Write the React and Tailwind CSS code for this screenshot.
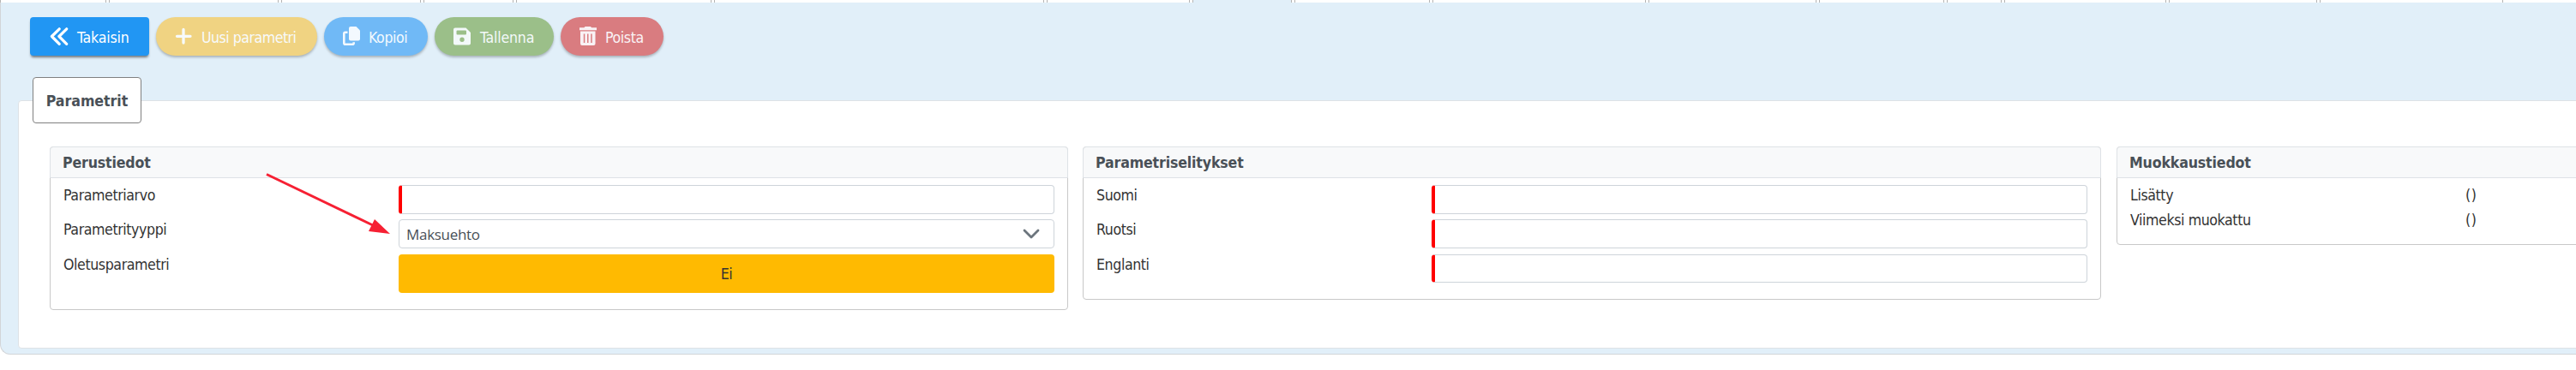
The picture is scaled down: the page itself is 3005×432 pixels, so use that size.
import React from 'react';

// Bottom slivers of the window tabs above the page
const TABS = [
  { width: 'w-[124px]' },
  { width: 'w-[198px]' },
  { width: 'w-[163px]' },
  { width: 'w-[105px]' },
  { width: 'w-[228px]' },
  { width: 'w-[385px]' },
  { width: 'w-[167px]' },
  { width: 'w-[116px]', active: true },
  { width: 'w-[158px]' },
  { width: 'w-[249px]' },
  { width: 'w-[196px]' },
  { width: 'w-[146px]' },
  { width: 'w-[64px]' },
  { width: 'w-[189px]' },
  { width: 'w-[173px]' },
  { width: 'w-[214px]' },
];

const ICONS = {
  back: (
    <g fill="none" stroke="currentColor" strokeWidth="3.2" strokeLinecap="round" strokeLinejoin="round">
      <path d="M11.2 2.8 2.4 11.5l8.8 8.8M19.7 2.8l-8.8 8.7 8.8 8.8" />
    </g>
  ),
  plus: <path d="M11 3.5V19M3.500 11.300H19" fill="none" stroke="currentColor" strokeWidth="3.3" strokeLinecap="round" />,
  copy: (
    <>
      <path d="M10 0h6.500L21 4.500v10a2 2 0 0 1-2 2h-9a2 2 0 0 1-2-2V2a2 2 0 0 1 2-2z" fill="currentColor" />
      <path d="M6.500 6.800H3.800a1.500 1.500 0 0 0-1.500 1.500v10.900a1.500 1.500 0 0 0 1.500 1.500h8.400a1.500 1.500 0 0 0 1.500-1.500v-1" fill="none" stroke="currentColor" strokeWidth="2.6" />
    </>
  ),
  save: (
    <path
      fill="currentColor"
      fillRule="evenodd"
      d="M3 1.500h12.500L21 7v12.500a2 2 0 0 1-2 2H3a2 2 0 0 1-2-2v-16a2 2 0 0 1 2-2zM5.500 4.500a1 1 0 0 0-1 1v3a1 1 0 0 0 1 1h9.500a1 1 0 0 0 1-1v-3a1 1 0 0 0-1-1zM11 12.500a2.700 2.700 0 1 0 0 5.400 2.700 2.700 0 0 0 0-5.400z"
    />
  ),
  trash: (
    <>
      <path d="M7.500 0h6.500l1 1.300h6v3H1v-3h5.500z" fill="currentColor" />
      <path
        fill="currentColor"
        fillRule="evenodd"
        d="M2 5.500h17.500V20a2 2 0 0 1-2 2H4a2 2 0 0 1-2-2zM5.800 8.500v10.500h1.500V8.500zm4.200 0v10.500h1.500V8.500zm4.200 0v10.500h1.500V8.500z"
      />
    </>
  ),
};

const ACTIONS = [
  { label: 'Takaisin', icon: 'back', look: 'w-[139px] gap-[10px] rounded bg-[#2196f3] pl-[23px] tracking-[-0.2px] text-white shadow-[0_3px_3px_-1px_rgba(0,0,0,0.5)]' },
  { label: 'Uusi parametri', icon: 'plus', look: 'w-[188px] gap-[10px] rounded-full bg-[#f0d382] pl-[21px] tracking-[-0.5px] text-[#f7fafb] shadow-[0_2px_3px_rgba(0,0,0,0.25)]' },
  { label: 'Kopioi', icon: 'copy', look: 'w-[121px] gap-[9px] rounded-full bg-[#70b9f6] pl-[21px] tracking-[-0.4px] text-[#f3f9fe] shadow-[0_2px_3px_rgba(0,0,0,0.25)]' },
  { label: 'Tallenna', icon: 'save', look: 'w-[139px] gap-[10px] rounded-full bg-[#9bbf89] pl-[21px] tracking-[-0.2px] text-[#f3f9fa] shadow-[0_2px_3px_rgba(0,0,0,0.25)]' },
  { label: 'Poista', icon: 'trash', look: 'w-[120px] gap-[9px] rounded-full bg-[#d97c80] pl-[21px] tracking-[-0.4px] text-[#f9f2f5] shadow-[0_2px_3px_rgba(0,0,0,0.25)]' },
];

function ActionButton({ label, icon, look }) {
  return (
    <button className={`flex h-[45px] items-center whitespace-nowrap ${look}`}>
      <svg viewBox="0 0 22 22" className="mb-0.5 size-[22px] shrink-0">{ICONS[icon]}</svg>
      <span className="pt-[3px]">{label}</span>
    </button>
  );
}

function Card({ title, className, children }) {
  return (
    <section className={`shrink-0 rounded border border-[#c8c8c8] ${className}`}>
      <h2 className="-mx-px -mt-px flex h-[37px] items-center rounded-t border border-[#dee2e6] bg-[#f8f9fa] pt-0.5 pl-[14px] font-bold tracking-[-0.15px] text-[#495057]">
        {title}
      </h2>
      {children}
    </section>
  );
}

function Field({ label, className, children }) {
  return (
    <div className={`flex items-start ${className ?? ''}`}>
      <label className="w-[391px] shrink-0 leading-6">{label}</label>
      {children}
    </div>
  );
}

function RequiredInput({ className }) {
  return <input className={`w-[765px] rounded border border-l-4 border-[#ced4da] border-l-[#ff0000] bg-white outline-none ${className}`} />;
}

export default function App() {
  return (
    <div className="relative h-[432px] w-[3005px] overflow-hidden bg-white font-['DejaVu_Sans_Condensed','DejaVu_Sans',sans-serif] text-[17.6px] tracking-[-0.4px] text-[#333333] [font-stretch:75%]">
      <div className="flex h-[3px] w-[3100px] gap-[3px]">
        {TABS.map((t, i) => (
          <div key={i} className={`shrink-0 border-x border-[#b4b4b4] ${t.width} ${t.active ? 'bg-[#e1eff9]' : 'bg-white'}`} />
        ))}
      </div>

      <div className="h-[411px] w-[3100px] rounded-bl-[12px] border-b border-l border-[#d2d5d8] bg-[#e1eff9] pt-[17px] pl-5">
        <div className="flex gap-2 pl-[14px]">
          {ACTIONS.map((a) => (
            <ActionButton key={a.label} {...a} />
          ))}
        </div>

        <div className="mt-[52px] h-[290px] rounded border border-[#dee2e6] bg-white pl-4">
          <div className="-mt-7 flex h-[54px] w-[127px] items-center justify-center rounded border border-[#808080] bg-white pt-0.5 font-bold tracking-[-0.05px] text-[#495057]">
            Parametrit
          </div>

          <div className="mt-[27px] flex items-start pl-5">
            <Card title="Perustiedot" className="mr-[17px] h-[191px] w-[1188px]">
              <div className="pt-2 pl-[15px]">
                <Field label="Parametriarvo" className="h-10">
                  <RequiredInput className="h-[34px]" />
                </Field>
                <Field label="Parametrityyppi" className="h-[41px]">
                  <div className="flex h-[34px] w-[765px] items-center justify-between rounded border border-[#ced4da] pr-4 pl-2 font-['Open_Sans',sans-serif] text-[17px] tracking-[-0.3px] text-[#495057] [font-stretch:100%]">
                    <span className="pt-0.5">Maksuehto</span>
                    <svg viewBox="0 0 20 12" className="h-3 w-5" fill="none" stroke="#6c757d" strokeWidth="2.8" strokeLinecap="round" strokeLinejoin="round">
                      <path d="m2 2 8 8 8-8" />
                    </svg>
                  </div>
                </Field>
                <Field label="Oletusparametri">
                  <button className="h-[45px] w-[765px] rounded bg-[#ffba01] pt-0.5">Ei</button>
                </Field>
              </div>
            </Card>

            <Card title="Parametriselitykset" className="mr-[18px] h-[179px] w-[1188px]">
              <div className="pt-2 pl-[15px]">
                <Field label="Suomi" className="h-10">
                  <RequiredInput className="h-[34px]" />
                </Field>
                <Field label="Ruotsi" className="h-[41px]">
                  <RequiredInput className="h-[34px]" />
                </Field>
                <Field label="Englanti">
                  <RequiredInput className="h-[33px]" />
                </Field>
              </div>
            </Card>

            <Card title="Muokkaustiedot" className="h-[115px] w-[600px]">
              <div className="pt-2 pl-[15px]">
                <Field label="Lisätty" className="h-[29px]">
                  <span className="leading-6 tracking-[0.5px]">()</span>
                </Field>
                <Field label="Viimeksi muokattu">
                  <span className="leading-6 tracking-[0.5px]">()</span>
                </Field>
              </div>
            </Card>
          </div>
        </div>
      </div>

      {/* Annotation arrow pointing at the type dropdown */}
      <svg className="absolute top-[195px] left-[305px]" width="160" height="85" viewBox="305 195 160 85">
        <path d="M311 203.500 436 263.500" stroke="#f62033" strokeWidth="3" />
        <path d="m437 256 18 17-25-3z" fill="#f62033" />
      </svg>
    </div>
  );
}
